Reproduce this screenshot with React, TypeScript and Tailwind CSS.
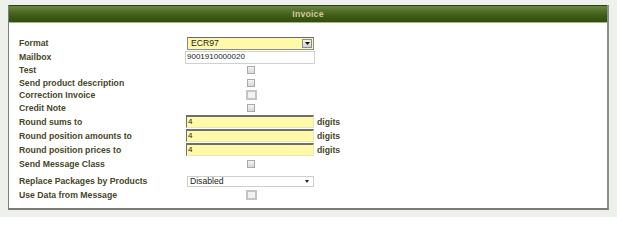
import React from 'react';

const labelCls =
  "w-[166px] shrink-0 text-[8.7px] font-bold text-[#474629] leading-none whitespace-nowrap";

const SmallBox = () => (
  <div className="w-[132px] flex justify-center">
    <span className="block w-[8px] h-[8px] border border-[#a9a9a9] bg-gradient-to-b from-[#f4f4f4] to-[#d8d8d8]" />
  </div>
);

const BigBox = () => (
  <div className="w-[132px] flex justify-center">
    <span className="block w-[11px] h-[10px] border-2 border-[#c4c4c4] bg-[#f2f2f2]" />
  </div>
);

const YellowInput = ({ value }: { value: string }) => (
  <div className="flex items-center">
    <div className="ml-[1px] w-[128px] h-[13px] bg-[#fffaa8] border-t-2 border-l border-t-[#6e6e6e] border-l-[#6e6e6e] border-b border-r border-b-[#e6e6c0] border-r-[#e6e6c0] flex items-center pl-[1px] text-[8px] text-[#222] leading-none">
      {value}
    </div>
    <span className="ml-[3px] text-[8.7px] font-bold text-[#474629] leading-none">digits</span>
  </div>
);

const Row = ({ label, h = 'h-[14px]', extra = '', children }: any) => (
  <div className={`flex items-center ${h} ${extra}`}>
    <div className={labelCls}>{label}</div>
    {children}
  </div>
);

export default function App() {
  return (
    <div
      className="w-[617px] h-[217px] bg-[#eef1eb] pt-[5px] pl-[8px]"
      style={{ fontFamily: '"Liberation Sans", Arial, sans-serif' }}
    >
      <div className="w-[601px] h-[205px] bg-white border-l border-l-[#7d7d7d] border-r-2 border-r-[#8e8e8e] border-b-2 border-b-[#7b7b7b]">
        <div className="h-[18px] bg-gradient-to-b from-[#6a8842] via-[#44621b] to-[#304d0c] border-t border-t-[#2a4508] border-b border-b-[#a4b684] flex items-center justify-center">
          <span className="text-[8.7px] font-bold text-[#d7c79a] leading-none tracking-[0.2px]">Invoice</span>
        </div>
        <div className="pl-[10px] pt-[13px]">
          <Row label="Format">
            <div className="ml-[2px] w-[127px] h-[13px] bg-[#fffaa8] border border-[#8a8a8a] border-t-[#6a6a6a] flex items-center justify-between">
              <span className="pl-[3px] text-[8.6px] text-[#222] leading-none">ECR97</span>
              <span className="mr-[1px] w-[10px] h-[9px] bg-gradient-to-b from-[#f2f2f2] to-[#d2d2d2] border border-[#8c8c8c] flex items-center justify-center">
                <svg width="5" height="3" viewBox="0 0 5 3"><path d="M0 0h5L2.5 3z" fill="#111" /></svg>
              </span>
            </div>
          </Row>
          <Row label="Mailbox">
            <div className="w-[130px] h-[13px] border border-[#d0d0d0] bg-white flex items-center pl-[1px] text-[8px] text-[#222] leading-none">
              9001910000020
            </div>
          </Row>
          <Row label="Test" h="h-[12.6px]"><SmallBox /></Row>
          <Row label="Send product description" h="h-[12.6px]"><SmallBox /></Row>
          <Row label="Correction Invoice" h="h-[12.6px]"><BigBox /></Row>
          <Row label="Credit Note" h="h-[12.6px]"><SmallBox /></Row>
          <Row label="Round sums to" extra="mt-[0.6px]"><YellowInput value="4" /></Row>
          <Row label="Round position amounts to"><YellowInput value="4" /></Row>
          <Row label="Round position prices to"><YellowInput value="4" /></Row>
          <Row label="Send Message Class"><SmallBox /></Row>
          <Row label="Replace Packages by Products" extra="mt-[3.5px]">
            <div className="ml-[2px] w-[127px] h-[11px] border border-[#cfcfcf] bg-white flex items-center justify-between">
              <span className="pl-[2px] text-[8.6px] text-[#222] leading-none">Disabled</span>
              <svg className="mr-[4px]" width="4" height="3" viewBox="0 0 4 3"><path d="M0 0h4L2 3z" fill="#222" /></svg>
            </div>
          </Row>
          <Row label="Use Data from Message"><BigBox /></Row>
        </div>
      </div>
    </div>
  );
}
